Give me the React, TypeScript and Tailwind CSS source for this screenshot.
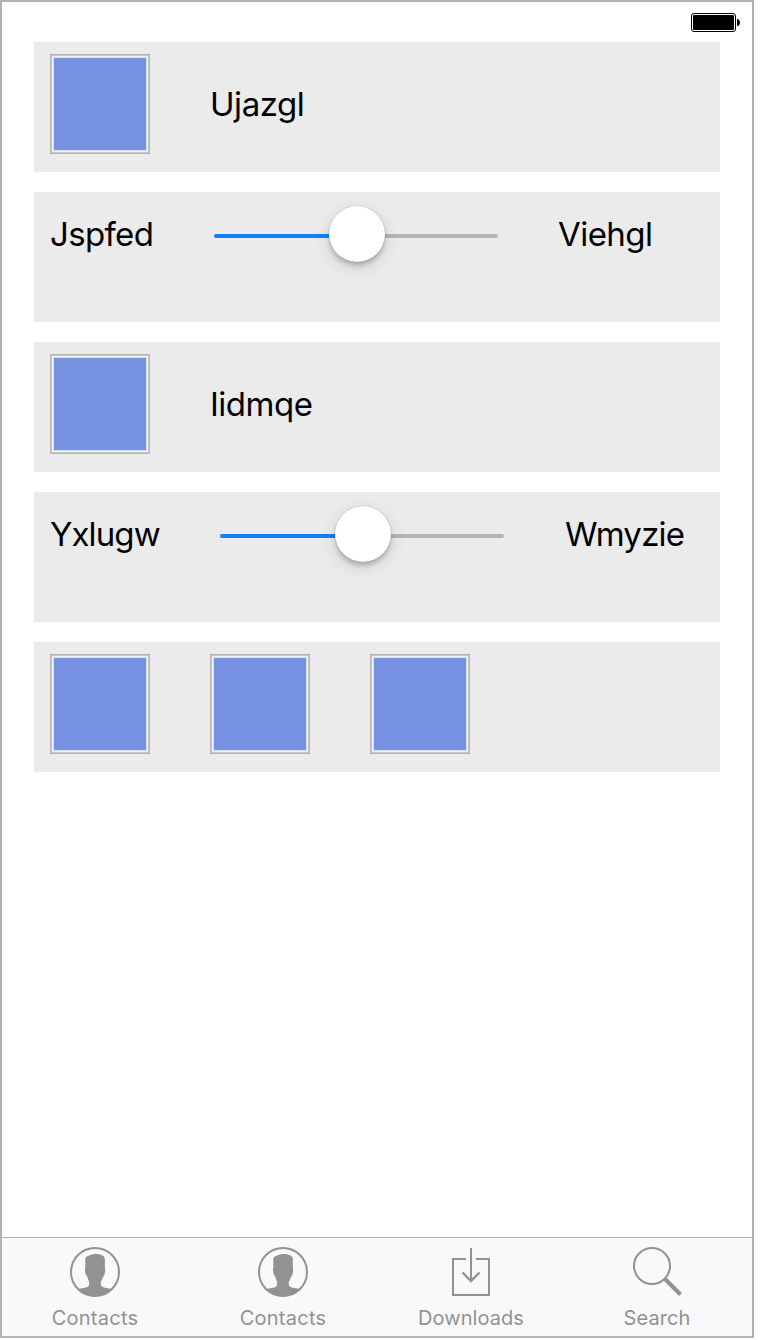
import type { ReactNode } from "react";

function Card({ children }: { children: ReactNode }) {
  return <section className="flex h-[130px] items-start bg-[#ebebeb] pl-4 pt-3">{children}</section>;
}

function Swatch() {
  return (
    <div className="size-[100px] shrink-0 border border-[#b5b5b5]">
      <div className="size-full border border-[#c6c6c6]">
        <div className="size-full border border-[#f1f2f7]">
          <div className="size-full border border-[#d9dff6] bg-[#7690e2]" />
        </div>
      </div>
    </div>
  );
}

function Label({ text, className }: { text: string; className: string }) {
  return (
    <span className={`block shrink-0 whitespace-nowrap text-[33px] leading-[40px] text-black ${className}`}>
      {text}
    </span>
  );
}

function Slider() {
  return (
    <div className="flex h-14 w-[284px] shrink-0 items-center">
      <div className="mt-1 h-1 w-[115px] rounded-l-full bg-[#147efb]" />
      <div className="relative z-10 size-14 rounded-full bg-white shadow-[0_0_1px_rgba(0,0,0,0.35),0_4px_4px_rgba(0,0,0,0.19),0_5px_18px_rgba(0,0,0,0.12)]" />
      <div className="mt-1 h-1 w-[113px] rounded-r-full bg-[#b6b6b6]" />
    </div>
  );
}

function Battery() {
  return (
    <svg width="50" height="19" viewBox="0 0 50 19" aria-hidden="true">
      <rect x="0.5" y="0.5" width="44" height="18" rx="2.5" fill="white" stroke="black" />
      <rect x="2" y="2" width="41" height="15" rx="1" fill="black" />
      <path d="M46 6h1q2 1 2 3.5T47 13h-1z" fill="black" />
    </svg>
  );
}

function ContactsIcon() {
  return (
    <svg width="50" height="50" viewBox="0 0 50 50" fill="none" aria-hidden="true">
      <circle cx="25" cy="25" r="24" stroke="#929292" strokeWidth="2" />
      <path
        d="M8 42C11.5 41.2 16 40.8 18.2 39.4C19.4 38.6 19.2 36.8 19.1 34.4C18.2 33.2 17.7 31.5 17.3 29.5C15.8 28.6 14.9 25.5 14.9 21.6C15.6 21 15.4 19.5 15.3 17.5V12C15.6 9.8 17.5 9 19.3 8.5C23 6.4 29.5 6.5 33 8.7C34.8 10 35 12 34.9 14.5V20.8C35.6 21.7 35.1 25.5 34.1 28.8C33.8 29.8 33.1 29.6 32.8 30C32.3 32 31.6 33.6 30.9 34.6C30.7 37 30.6 38.6 31.8 39.4C34 40.8 38.5 41.2 42 42C37 46.7 31 49 25 49S13 46.7 8 42Z"
        fill="#929292"
      />
    </svg>
  );
}

function DownloadsIcon() {
  return (
    <svg width="50" height="50" viewBox="0 0 50 50" fill="none" stroke="#929292" strokeWidth="2" aria-hidden="true">
      <path d="M20 12H7V48H43V12H30M25 1V34" />
      <path d="M16.5 25.5L25 34L33.5 25.5" strokeWidth="2.4" />
    </svg>
  );
}

function SearchIcon() {
  return (
    <svg width="50" height="50" viewBox="0 0 50 50" fill="none" stroke="#929292" aria-hidden="true">
      <circle cx="20" cy="19" r="18" strokeWidth="2" />
      <path d="M33 32L48.5 47.5" strokeWidth="4" />
    </svg>
  );
}

function Tab({ icon, text, className }: { icon: ReactNode; text: string; className: string }) {
  return (
    <div className="flex min-w-0 flex-col items-center pt-[9px]">
      {icon}
      <span className={`mt-[9px] text-[20px] leading-6 text-[#929292] ${className}`}>{text}</span>
    </div>
  );
}

export default function App() {
  return (
    <div className="h-[1340px] w-[760px] bg-white font-['Inter','Liberation_Sans',sans-serif]">
      <div className="flex h-[1338px] w-[754px] flex-col border-2 border-[#b2b2b2]">
        <header className="flex h-10 shrink-0 justify-end pr-[11px] pt-[11px]">
          <Battery />
        </header>
        <main className="flex flex-1 flex-col gap-5 pl-8 pr-8">
          <Card>
            <Swatch />
            <Label text="Ujazgl" className="ml-[60px] mt-[30px] tracking-[-0.45px]" />
          </Card>
          <Card>
            <Label text="Jspfed" className="mt-[10px] w-[164px] tracking-[-0.65px]" />
            <div className="mt-0.5"><Slider /></div>
            <Label text="Viehgl" className="ml-[60px] mt-[10px] tracking-[-0.55px]" />
          </Card>
          <Card>
            <Swatch />
            <Label text="Iidmqe" className="ml-[60px] mt-[30px] tracking-[-0.5px]" />
          </Card>
          <Card>
            <Label text="Yxlugw" className="mt-[10px] w-[170px] tracking-[-0.9px]" />
            <div className="mt-0.5"><Slider /></div>
            <Label text="Wmyzie" className="ml-[61px] mt-[10px] tracking-[-0.75px]" />
          </Card>
          <Card>
            <div className="flex gap-[60px]">
              <Swatch />
              <Swatch />
              <Swatch />
            </div>
          </Card>
        </main>
        <nav className="grid h-[99px] shrink-0 grid-cols-[186px_190px_186px_186px] border-t border-[#b2b2b2] bg-[#f9f9f9]">
          <Tab icon={<ContactsIcon />} text="Contacts" className="tracking-[0.25px]" />
          <Tab icon={<ContactsIcon />} text="Contacts" className="tracking-[0.25px]" />
          <Tab icon={<DownloadsIcon />} text="Downloads" className="tracking-[0.05px]" />
          <Tab icon={<SearchIcon />} text="Search" className="tracking-[0.1px]" />
        </nav>
      </div>
    </div>
  );
}
